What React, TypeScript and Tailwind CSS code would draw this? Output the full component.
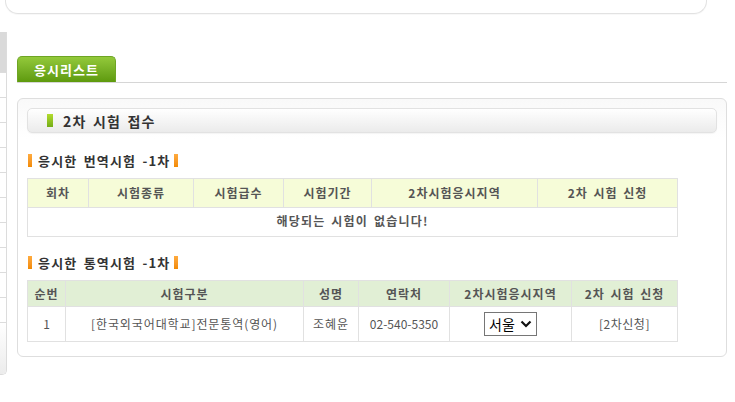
import React from 'react';

const font = { fontFamily: '"Noto Sans CJK KR", "Noto Sans", sans-serif' };

const firstCols = [
  { label: '회차', w: 'w-[61px]' },
  { label: '시험종류', w: 'w-[105px]' },
  { label: '시험급수', w: 'w-[90px]' },
  { label: '시험기간', w: 'w-[88px]' },
  { label: '2차시험응시지역', w: 'w-[166px]' },
  { label: '2차 시험 신청', w: 'w-[140px]' },
];

const secondCols = [
  { label: '순번', w: 'w-[38px]' },
  { label: '시험구분', w: 'w-[238px]' },
  { label: '성명', w: 'w-[55px]' },
  { label: '연락처', w: 'w-[91px]' },
  { label: '2차시험응시지역', w: 'w-[122px]' },
  { label: '2차 시험 신청', w: 'w-[106px]' },
];

const SectionTitle: React.FC<{ text: string }> = ({ text }) => (
  <div className="flex items-center h-[14px] pl-[1px]">
    <span className="w-[4px] h-[13px] bg-gradient-to-b from-[#ffab3d] to-[#f28a00]" />
    <span className="ml-[6px] text-[13px] font-bold text-[#333] leading-none tracking-[1.2px] [word-spacing:2px]">{text}</span>
    <span className="ml-[4px] w-[4px] h-[13px] bg-gradient-to-b from-[#ffab3d] to-[#f28a00]" />
  </div>
);

const App: React.FC = () => {
  return (
    <div className="w-[735px] h-[402px] bg-white overflow-hidden" style={font}>
      {/* bottom edge of the panel above */}
      <div className="ml-[5px] w-[702px] h-[14px] border border-t-0 border-[#e2e2e2] rounded-b-[13px] shadow-[0_1px_1px_rgba(0,0,0,0.03)]" />

      <div className="flex mt-[18px]">
        {/* clipped side menu */}
        <div className="w-[7px] h-[343px] border-r border-b border-[#dcdcdc] rounded-br-[5px] overflow-hidden flex flex-col">
          <div className="h-[40px] bg-[#dadada]" />
          {[0, 1, 2, 3, 4, 5, 6, 7, 8, 9].map((i) => (
            <div key={i} className="h-[25px] border-t border-[#dcdcdc]" />
          ))}
          <div className="flex-1 border-t border-[#dcdcdc] bg-gradient-to-b from-white to-[#ececec]" />
        </div>

        <div className="ml-[10px] w-[710px]">
          {/* tab */}
          <div className="mt-[24px] border-b border-[#d6d6d6]">
            <div className="w-[99px] h-[26px] rounded-t-[5px] bg-gradient-to-b from-[#93c93a] to-[#5e9a0c] border border-b-0 border-[#6ea524] flex items-center justify-center">
              <span className="text-[13px] font-bold text-white leading-none tracking-[1px]">응시리스트</span>
            </div>
          </div>

          {/* main panel */}
          <div className="mt-[15px] h-[259px] border border-[#dedede] rounded-[6px] bg-gradient-to-b from-[#f9f9f9] to-white to-[40px] px-[9px] pt-[9px]">
            <div className="h-[25px] border border-[#e2e2e2] rounded-[5px] bg-gradient-to-b from-white to-[#ebebeb] flex items-center shadow-[0_1px_1px_rgba(0,0,0,0.04)]">
              <span className="ml-[19px] w-[6px] h-[13px] bg-gradient-to-b from-[#b3dc2e] to-[#74ad17]" />
              <span className="ml-[10px] text-[14px] font-bold text-[#333] leading-none tracking-[1.2px] [word-spacing:2px]">2차 시험 접수</span>
            </div>

            <div className="mt-[20px]">
              <SectionTitle text="응시한 번역시험 -1차" />
            </div>
            <table className="mt-[11px] w-[650px] border-collapse text-[12px] text-[#555] table-fixed">
              <thead>
                <tr className="h-[29px] bg-[#f6fcd8]">
                  {firstCols.map((c) => (
                    <th key={c.label} className={`${c.w} border border-[#e1e1e1] font-bold tracking-[1px] [word-spacing:2px]`}>
                      {c.label}
                    </th>
                  ))}
                </tr>
              </thead>
              <tbody>
                <tr className="h-[29px]">
                  <td colSpan={6} className="border border-[#e1e1e1] text-center font-bold align-top pt-[4px] tracking-[1.2px] [word-spacing:2px]">
                    해당되는 시험이 없습니다!
                  </td>
                </tr>
              </tbody>
            </table>

            <div className="mt-[18px]">
              <SectionTitle text="응시한 통역시험 -1차" />
            </div>
            <table className="mt-[11px] w-[650px] border-collapse text-[12px] text-[#555] table-fixed">
              <thead>
                <tr className="h-[26px] bg-[#e1efd5]">
                  {secondCols.map((c) => (
                    <th key={c.label} className={`${c.w} border border-[#e1e1e1] font-bold tracking-[1px] [word-spacing:2px]`}>
                      {c.label}
                    </th>
                  ))}
                </tr>
              </thead>
              <tbody>
                <tr className="h-[35px] text-center">
                  <td className="border border-[#e1e1e1]">1</td>
                  <td className="border border-[#e1e1e1] tracking-[0.9px]">[한국외국어대학교]전문통역(영어)</td>
                  <td className="border border-[#e1e1e1] tracking-[1px]">조혜윤</td>
                  <td className="border border-[#e1e1e1]">02-540-5350</td>
                  <td className="border border-[#e1e1e1]">
                    <div className="mx-auto w-[53px] h-[24px] border border-[#767676] bg-white flex items-center pl-[4px] text-[14px] text-black leading-none">
                      <span>서울</span>
                      <svg className="ml-[5px]" width="12" height="8" viewBox="0 0 12 8">
                        <path d="M1.5 1.5 L6 6 L10.5 1.5" fill="none" stroke="#111" strokeWidth="2.2" />
                      </svg>
                    </div>
                  </td>
                  <td className="border border-[#e1e1e1] tracking-[0.5px]">[2차신청]</td>
                </tr>
              </tbody>
            </table>
          </div>
        </div>
      </div>
    </div>
  );
};

export default App;
